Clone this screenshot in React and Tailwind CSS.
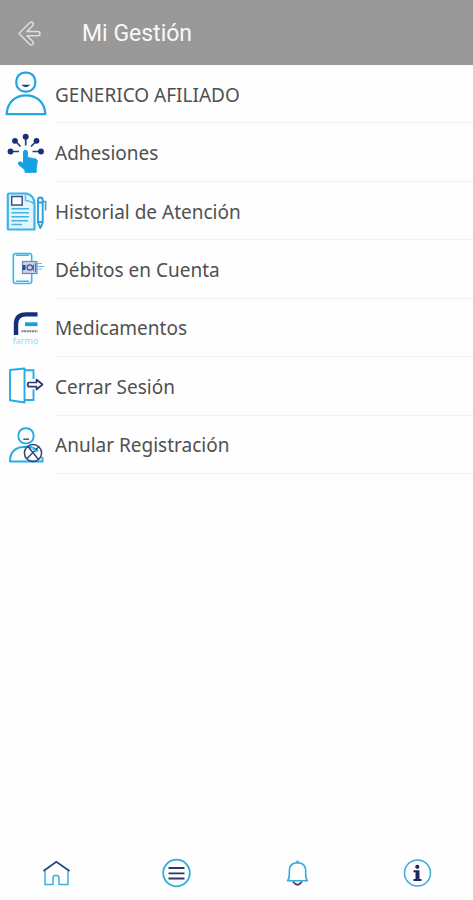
import React from 'react';

const UserIcon = () => (
    <svg viewBox="0 0 52 58" className="h-[58px] w-[52px] shrink-0" fill="none" aria-hidden="true">
        <rect x="16.3" y="7.6" width="19" height="19" rx="8.6" stroke="#22a5e2" strokeWidth="2.2" />
        <path d="M6.6 49.2 C7.5 37 15.5 30.3 26 30.3 S44.5 37 45.4 49.2 Z" stroke="#22a5e2" strokeWidth="2.2" strokeLinejoin="round" />
        <path d="M21.3 19.8 H30.3 Q25.8 24.6 21.3 19.8 Z" fill="#1f3f7f" />
    </svg>
);

const TouchIcon = () => (
    <svg viewBox="0 0 52 58" className="h-[58px] w-[52px] shrink-0" fill="none" aria-hidden="true">
        <path
            d="M10.5 27.5 H19 M15.3 17 L20.5 22.5 M25.7 13 V21.5 M36.5 17 L31 22.5 M41 27.5 H32.5"
            stroke="#23407f"
            strokeWidth="1.7"
        />
        <g fill="#1b2f75">
            <circle cx="10.5" cy="27.5" r="2.9" />
            <circle cx="15" cy="16.8" r="2.9" />
            <circle cx="25.7" cy="12.8" r="3" />
            <circle cx="36.5" cy="16.8" r="2.9" />
            <circle cx="41" cy="27.5" r="2.9" />
        </g>
        <path
            d="M23.5 28 Q23.5 26.3 25.5 26.3 Q27.4 26.3 27.4 28 V33.8 Q29 32.8 30.3 34.2 Q32 33.4 33.2 34.8 Q35 34.2 36.3 35.4 Q37.4 36 37.2 38 L36.2 44 V48.3 H25 V46 L18.6 40.5 Q17.6 37.8 20.5 37.8 L23.5 39.5 Z"
            fill="#15a2e4"
            stroke="#15a2e4"
            strokeLinejoin="round"
        />
    </svg>
);

const HistoryIcon = () => (
    <svg viewBox="0 0 52 58" className="h-[58px] w-[52px] shrink-0" fill="none" aria-hidden="true">
        <path
            d="M9 11.5 H26.5 Q34.5 13.5 34.5 22 V47.5 H9 Q7.8 47.5 7.8 46 V13 Q7.8 11.5 9 11.5 Z"
            stroke="#39b4e8"
            strokeWidth="2.2"
            fill="#e3f4fc"
            strokeLinejoin="round"
        />
        <path d="M25.5 12 V18.5 Q30 18.5 34 22" stroke="#5dbce5" strokeWidth="1.4" />
        <rect x="11.7" y="14.5" width="10.5" height="8.5" stroke="#3c4f83" strokeWidth="1.5" fill="#fff" />
        <path d="M11.5 26.7 H29 M11.5 30.7 H29 M11.5 34.7 H29 M11.5 38.7 H28 M11.5 42.5 H22" stroke="#45b2e1" strokeWidth="1.5" />
        <path
            d="M38 18 V40.5 L40.3 46 L42.7 40.5 V18 Q42.7 15.5 40.3 15.5 Q38 15.5 38 18 Z M38 20.5 H42.7 M38 40 H42.7"
            stroke="#2ba0d6"
            strokeWidth="1.9"
            strokeLinejoin="round"
        />
        <path d="M43 19.5 H45.6 V28.5" stroke="#3aa6d8" strokeWidth="1.6" />
    </svg>
);

const DebitIcon = () => (
    <svg viewBox="0 0 52 58" className="h-[58px] w-[52px] shrink-0" fill="none" aria-hidden="true">
        <rect x="13.3" y="13.5" width="18.4" height="30" rx="2.5" stroke="#39b6ec" strokeWidth="1.6" />
        <path d="M16 15.3 H29 M16 41.3 H29" stroke="#39b6ec" strokeWidth="1.5" />
        <rect x="22.5" y="21.5" width="14.5" height="12" fill="#c8d4eb" stroke="#7188bb" strokeWidth="1.2" />
        <rect x="22.5" y="25" width="3" height="5" fill="#24468a" />
        <circle cx="29.8" cy="27.5" r="2.7" stroke="#3d5594" strokeWidth="1.2" />
        <path d="M33.5 24.5 V31 M35.5 23 V32" stroke="#506aa5" />
        <path d="M37.5 23.5 H42 M38 26.5 H44.5 M37.5 29 H42" stroke="#69bfe2" />
    </svg>
);

const PharmacyIcon = () => (
    <svg viewBox="0 0 52 58" className="h-[58px] w-[52px] shrink-0" fill="none" aria-hidden="true">
        <path d="M16 36 V25.5 Q16 15.4 26 15.4 H37.5" stroke="#172e7c" strokeWidth="4.4" />
        <rect x="25" y="23.3" width="12.5" height="3.8" fill="#1a9ddd" />
        <path d="M21.5 32.3 H37.5" stroke="#777d9e" strokeWidth="2" strokeDasharray="2 0.6" />
        <text x="25.5" y="44.5" textAnchor="middle" fontSize="9" fontFamily="'Noto Sans', sans-serif" fill="#9bd5ee">
            farmo
        </text>
    </svg>
);

const LogoutIcon = () => (
    <svg viewBox="0 0 52 58" className="h-[58px] w-[52px] shrink-0" fill="none" aria-hidden="true">
        <path d="M24.5 13.3 H33.5 V22 M33.5 32.5 V43 H24.5" stroke="#27abe5" strokeWidth="1.9" />
        <path d="M10 13 L24.5 11.5 V45.5 L10 43.2 Z" stroke="#27abe5" strokeWidth="1.9" strokeLinejoin="round" />
        <path
            d="M28.5 25.5 H36.5 V22.5 L42.5 27.5 L36.5 32.5 V29.7 H28.5 Q26.8 27.6 28.5 25.5 Z"
            stroke="#2a3972"
            strokeWidth="1.7"
            fill="#fff"
            strokeLinejoin="round"
        />
    </svg>
);

const CancelUserIcon = () => (
    <svg viewBox="0 0 52 58" className="h-[58px] w-[52px] shrink-0" fill="none" aria-hidden="true">
        <rect x="18.4" y="12.2" width="15.2" height="15.2" rx="7" stroke="#27abe5" strokeWidth="1.9" />
        <path d="M23.3 23.2 H29" stroke="#39466f" strokeWidth="1.4" />
        <path d="M42.5 41 V45.5 H10 Q10 30.8 26 30.8 Q34 31 38 35" stroke="#27abe5" strokeWidth="1.9" strokeLinejoin="round" />
        <circle cx="33" cy="37" r="8.6" stroke="#2a4676" strokeWidth="1.5" />
        <path d="M28 30.5 L38.5 43.5 M38.5 31 L27 42.5" stroke="#2a4676" strokeWidth="1.4" />
        <path d="M31 30.5 L36.5 36" stroke="#49b1df" strokeWidth="1.4" />
    </svg>
);

const HomeIcon = () => (
    <svg viewBox="0 0 30 30" className="size-[30px]" fill="none" aria-hidden="true">
        <path
            d="M4 13 V26.5 H12 V20 Q12 17.5 14.5 17.5 H15.5 Q18 17.5 18 20 V26.5 H27 V13"
            stroke="#3fb0df"
            strokeWidth="1.5"
        />
        <path d="M2.5 13 L15.3 3.8 L28.5 13" stroke="#26447f" strokeWidth="1.8" />
    </svg>
);

const MenuIcon = () => (
    <svg viewBox="0 0 30 30" className="size-[30px]" fill="none" aria-hidden="true">
        <circle cx="15.5" cy="15" r="13.3" stroke="#2fabe0" strokeWidth="1.8" />
        <path d="M7.5 10 H23.5 M7.5 15.3 H23.5 M7.5 20.5 H23.5" stroke="#2e3a66" strokeWidth="1.8" />
    </svg>
);

const BellIcon = () => (
    <svg viewBox="0 0 30 30" className="size-[30px]" fill="none" aria-hidden="true">
        <path d="M11 23.5 Q15.5 30 20 23.5" stroke="#3c4a76" strokeWidth="1.8" />
        <path
            d="M5.5 22.8 Q7.3 21 7.3 16.5 V13 Q7.3 5 15.5 4.6 Q23.7 5 23.7 13 V16.5 Q23.7 21 25.5 22.8 Z"
            stroke="#36abdc"
            strokeWidth="1.6"
            strokeLinejoin="round"
        />
        <circle cx="15.5" cy="3.7" r="1.3" fill="#36abdc" />
    </svg>
);

const InfoIcon = () => (
    <svg viewBox="0 0 30 30" className="size-[30px]" fill="none" aria-hidden="true">
        <circle cx="15.5" cy="15" r="13" stroke="#3aacdc" strokeWidth="1.5" />
        <circle cx="15.3" cy="8.8" r="2.1" fill="#1f2a60" />
        <path d="M11.5 12.3 H17.5 V21 H19.5 V23 H11.5 V21 H13.5 V14.3 H11.5 Z" fill="#1f2a60" />
    </svg>
);

const menuItems = [
    { label: 'GENERICO AFILIADO', icon: UserIcon },
    { label: 'Adhesiones', icon: TouchIcon },
    { label: 'Historial de Atención', icon: HistoryIcon },
    { label: 'Débitos en Cuenta', icon: DebitIcon },
    { label: 'Medicamentos', icon: PharmacyIcon },
    { label: 'Cerrar Sesión', icon: LogoutIcon },
    { label: 'Anular Registración', icon: CancelUserIcon },
];

const tabs = [
    { label: 'Inicio', icon: HomeIcon },
    { label: 'Menú', icon: MenuIcon },
    { label: 'Notificaciones', icon: BellIcon },
    { label: 'Información', icon: InfoIcon },
];

const App = () => {
    return (
        <div className="flex min-h-screen flex-col bg-[#fefefe] font-['Noto_Sans',sans-serif] text-[#505050]">
            <header className="flex h-[65px] items-center bg-[#999] pt-0.5 pl-4">
                <button type="button" aria-label="Volver" className="mr-10">
                    <svg viewBox="0 0 26 30" className="h-[30px] w-[26px]" fill="none" aria-hidden="true">
                        <path
                            d="M3 14.5 L14 3.5 Q16 2.5 17.2 4.2 Q17.8 5.7 16.5 7 L11 12.5 H22 Q24 12.7 24 14.7 Q24 16.5 22 16.7 H11 L16.8 22.5 Q18 24 16.9 25.3 Q15.5 26.7 13.8 25.5 Z"
                            stroke="#dedede"
                            strokeWidth="1.5"
                            strokeLinejoin="round"
                        />
                    </svg>
                </button>
                <h1 className="font-['Roboto',sans-serif] text-[23px] leading-7 text-[#f8f8f8]">Mi Gestión</h1>
            </header>

            <main className="flex-1">
                <ul className="grid auto-rows-[minmax(58px,1fr)] min-h-[409px]">
                    {menuItems.map(({ label, icon: Icon }) => (
                        <li key={label} className="flex">
                            <a href="#" className="flex flex-1 items-center">
                                <Icon />
                                <span className="ml-[3px] flex flex-1 items-center self-stretch border-b border-[#f2f2f2] pt-0.5 text-[19px] leading-6">
                                    {label}
                                </span>
                            </a>
                        </li>
                    ))}
                </ul>
            </main>

            <nav className="flex h-[63px] items-center justify-between border-t border-[#fafafa] px-[41px] pt-2">
                {tabs.map(({ label, icon: Icon }) => (
                    <button key={label} type="button" aria-label={label}>
                        <Icon />
                    </button>
                ))}
            </nav>
        </div>
    );
};

export default App;
